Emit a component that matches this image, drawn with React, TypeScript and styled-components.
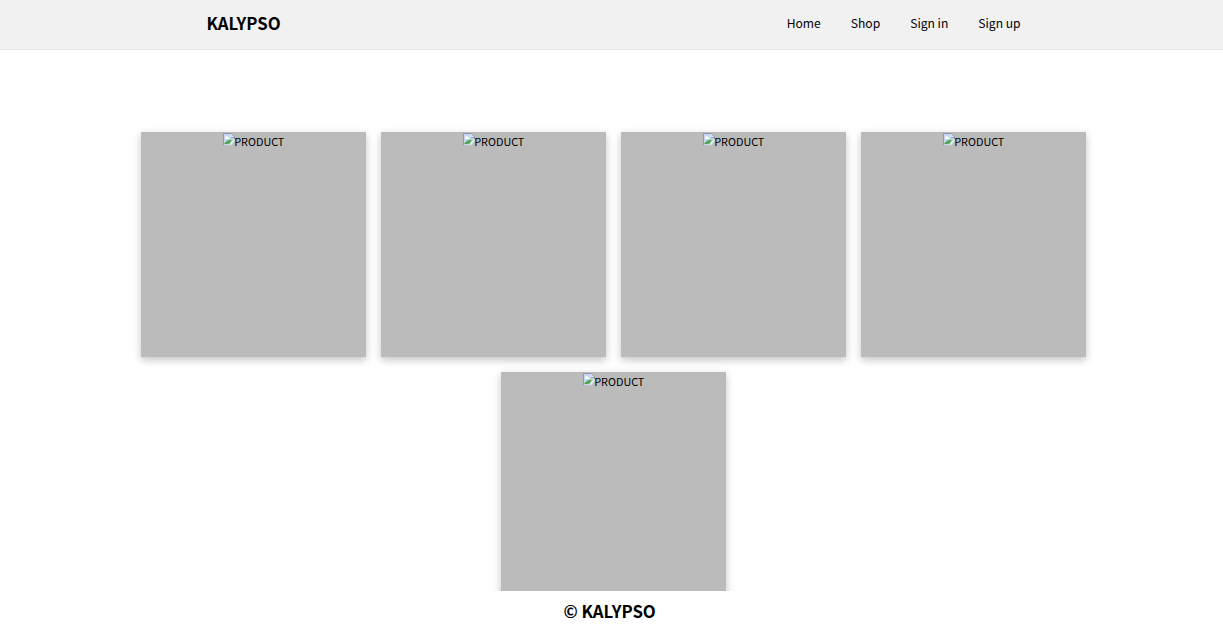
import React from "react";
import styled, { createGlobalStyle } from "styled-components";

const Global = createGlobalStyle`
  * { box-sizing: border-box; margin: 0; padding: 0; }
  body { font-family: "Noto Sans CJK SC", "Noto Sans CJK JP", sans-serif; font-size: 12px; color: #000; background: #fff; }
`;
const Page = styled.div`height: 635px; display: flex; flex-direction: column; overflow: hidden;`;
const Header = styled.header`
  flex: none; height: 50px; background: #f1f1f1; border-bottom: 1px solid #e5e5e5;
  display: flex; align-items: center; justify-content: space-between; padding: 0 202.4px 3px 206.4px;
`;
const Logo = styled.h1`font-size: 16.8px; line-height: 26px; font-weight: 700;`;
const Nav = styled.nav`display: flex; gap: 30px;`;
const NavLink = styled.a`font-size: 12.1px; line-height: 20px; color: #000;`;
const Grid = styled.main`
  flex: 1; min-height: 0; overflow: hidden; padding: 82px 133px 0 137px;
  display: flex; flex-wrap: wrap; align-content: flex-start; justify-content: center; gap: 15px;
`;
const Card = styled.article`
  width: 225px; height: 225px; background: #bbb; box-shadow: 0 3px 8px rgba(0, 0, 0, 0.24);
  display: flex; justify-content: center; align-items: flex-start; padding: 1px 0 0;
`;
const Alt = styled.span`font-size: 10.8px; line-height: 17px;`;
const Footer = styled.footer`
  flex: none; height: 44px; background: #fff; text-align: center; font-size: 16.8px; font-weight: 700; line-height: 40px; padding-right: 3.8px;
`;
const Icon = styled.svg`flex: none; display: block; margin-right: -1.4px;`;
const BrokenImage = () => (
  <Icon width="13" height="12" viewBox="0 0 13 12">
    <path d="M0 0H8L12 4V12H0Z" fill="#929aa3" />
    <path d="M1 1H8V5H11V12H1Z" fill="#c3d7f5" />
    <path d="M1 11C3 8 6 6 9 7L6 11H1Z" fill="#53a84a" />
    <path d="M2 5C2 3 4 2 5 4C6 4 7 5 6 6H2Z" fill="#fff" />
    <path d="M8 1L11 4H8Z" fill="#eef2f5" />
    <path d="M12 6V8L8 12H6Z" fill="#edf0f2" />
    <path d="M12 8V12H8Z" fill="#bbb" />
  </Icon>
);
const products = [1, 2, 3, 4, 5];

export default function App() {
  return (
    <Page>
      <Global />
      <Header>
        <Logo>KALYPSO</Logo>
        <Nav>{["Home", "Shop", "Sign in", "Sign up"].map((t) => <NavLink key={t}>{t}</NavLink>)}</Nav>
      </Header>
      <Grid>
        {products.map((id) => <Card key={id}><BrokenImage /><Alt>PRODUCT</Alt></Card>)}
      </Grid>
      <Footer>© KALYPSO</Footer>
    </Page>
  );
}
